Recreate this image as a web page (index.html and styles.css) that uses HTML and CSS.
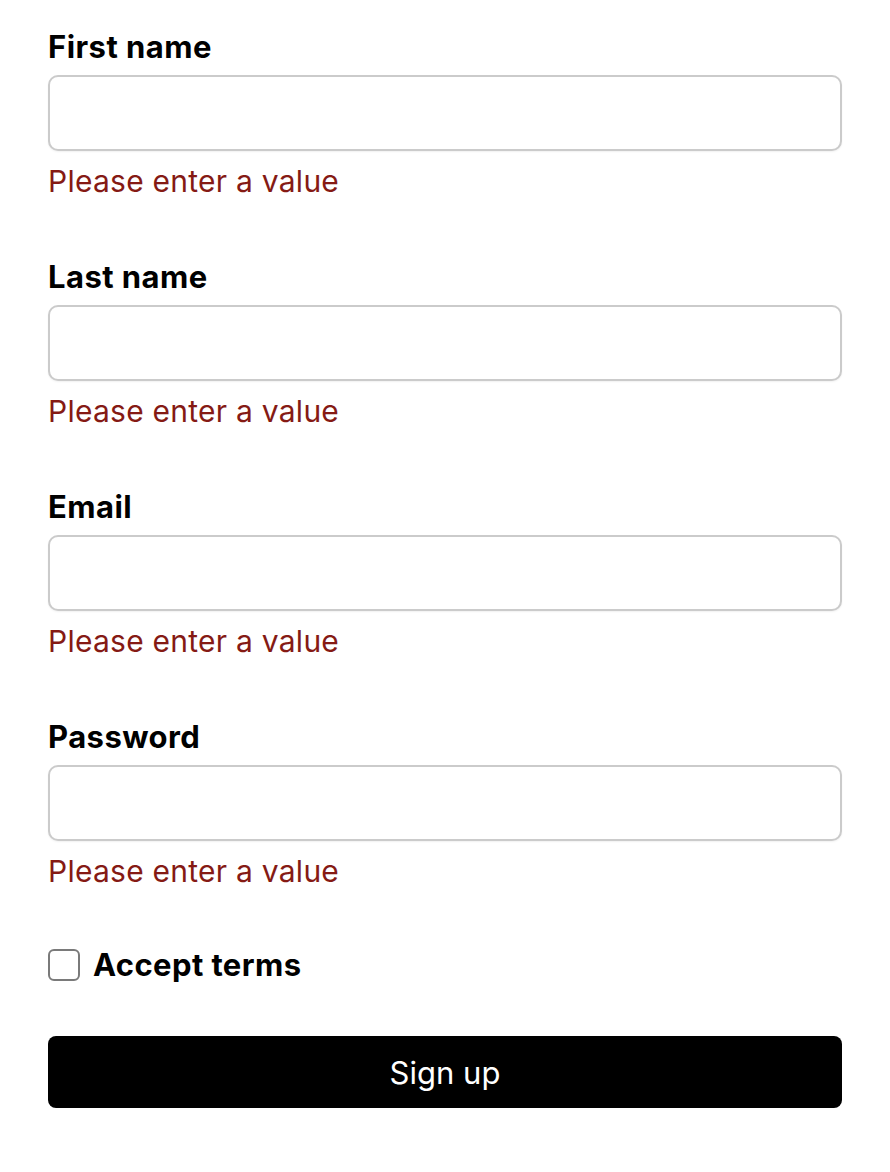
FILE: index.html
```html
<!DOCTYPE html>
<html lang="en">
<head>
  <meta charset="UTF-8" />
  <meta name="viewport" content="width=device-width, initial-scale=1.0"/>
  <title>Sign up</title>
  <link rel="stylesheet" href="styles.css">
</head>
<body>

  <form class="signup" onsubmit="return false">
    <div class="field">
      <label for="firstName">First name</label>
      <input type="text" id="firstName" />
      <p class="error">Please enter a value</p>
    </div>

    <div class="field">
      <label for="lastName">Last name</label>
      <input type="text" id="lastName" />
      <p class="error">Please enter a value</p>
    </div>

    <div class="field">
      <label for="email">Email</label>
      <input type="email" id="email" />
      <p class="error">Please enter a value</p>
    </div>

    <div class="field">
      <label for="password">Password</label>
      <input type="password" id="password" />
      <p class="error">Please enter a value</p>
    </div>

    <label class="terms">
      <input type="checkbox" id="acceptTerms" />
      <span>Accept terms</span>
    </label>

    <button type="submit">Sign up</button>
  </form>

</body>
</html>
```

FILE: styles.css
```css
body {
  margin: 0;
  font-family: Inter, "Noto Sans", sans-serif;
  background-color: #fff;
  color: #000;
}

.signup {
  display: flex;
  flex-direction: column;
  padding: 30px 48px 40px;
}

.field {
  display: flex;
  flex-direction: column;
  margin-bottom: 62px;
}

.field label {
  font-size: 31px;
  line-height: 34px;
  font-weight: 700;
  letter-spacing: 0.45px;
}

.field input {
  box-sizing: border-box;
  height: 76px;
  margin-top: 11px;
  padding: 0 16px;
  font-size: 28px;
  font-family: inherit;
  border: 2px solid #cbcbcb;
  border-radius: 10px;
  box-shadow: 0 1px 2px rgba(0, 0, 0, 0.06);
  outline: none;
}

.error {
  margin: 13px 0 0;
  font-size: 30px;
  line-height: 34px;
  letter-spacing: 0.25px;
  color: #851a14;
}

.terms {
  display: flex;
  align-items: center;
  gap: 13px;
  margin-top: -2px;
  font-size: 31px;
  line-height: 34px;
  font-weight: 700;
  letter-spacing: 0.4px;
}

.terms input {
  appearance: none;
  box-sizing: border-box;
  width: 32px;
  height: 32px;
  margin: 0;
  border: 2px solid #7a7a7a;
  border-radius: 6px;
  background: #fff;
}

button {
  margin-top: 54px;
  height: 72px;
  font-family: inherit;
  font-size: 31px;
  border: none;
  border-radius: 8px;
  background-color: #000;
  color: #fff;
  cursor: pointer;
}
```
